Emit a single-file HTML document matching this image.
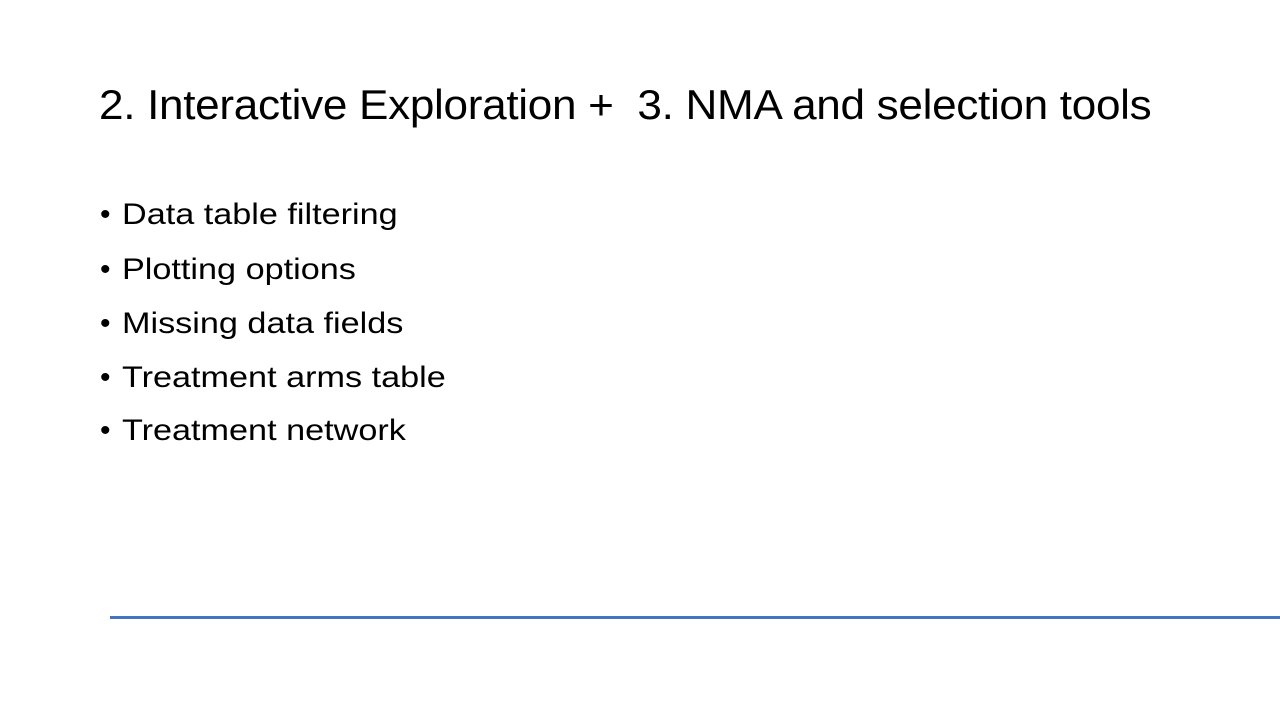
<!DOCTYPE html>
<html><head><meta charset="utf-8"><style>
body{margin:0;width:1280px;height:720px;background:#fff;overflow:hidden;position:relative;font-family:"Liberation Sans",sans-serif;color:#000}
.t{position:absolute;left:99px;top:81px;font-size:42px;white-space:nowrap;transform-origin:0 0;transform:scaleX(1.05);font-weight:normal;letter-spacing:-0.3px}
.b{position:absolute;left:100px;font-size:30px;white-space:nowrap;line-height:1}
.b span{position:absolute;left:22px;transform-origin:0 0;transform:scaleX(1.14)}
.line{position:absolute;left:110px;top:616px;width:1170px;height:3px;background:#4472C4}
</style></head><body>
<div class="t">2. Interactive Exploration +&nbsp; 3. NMA and selection tools</div>
<div class="b" style="top:200px">•<span>Data table filtering</span></div>
<div class="b" style="top:255px">•<span>Plotting options</span></div>
<div class="b" style="top:309px">•<span>Missing data fields</span></div>
<div class="b" style="top:363px">•<span>Treatment arms table</span></div>
<div class="b" style="top:416px">•<span>Treatment network</span></div>
<div class="line"></div>
</body></html>
